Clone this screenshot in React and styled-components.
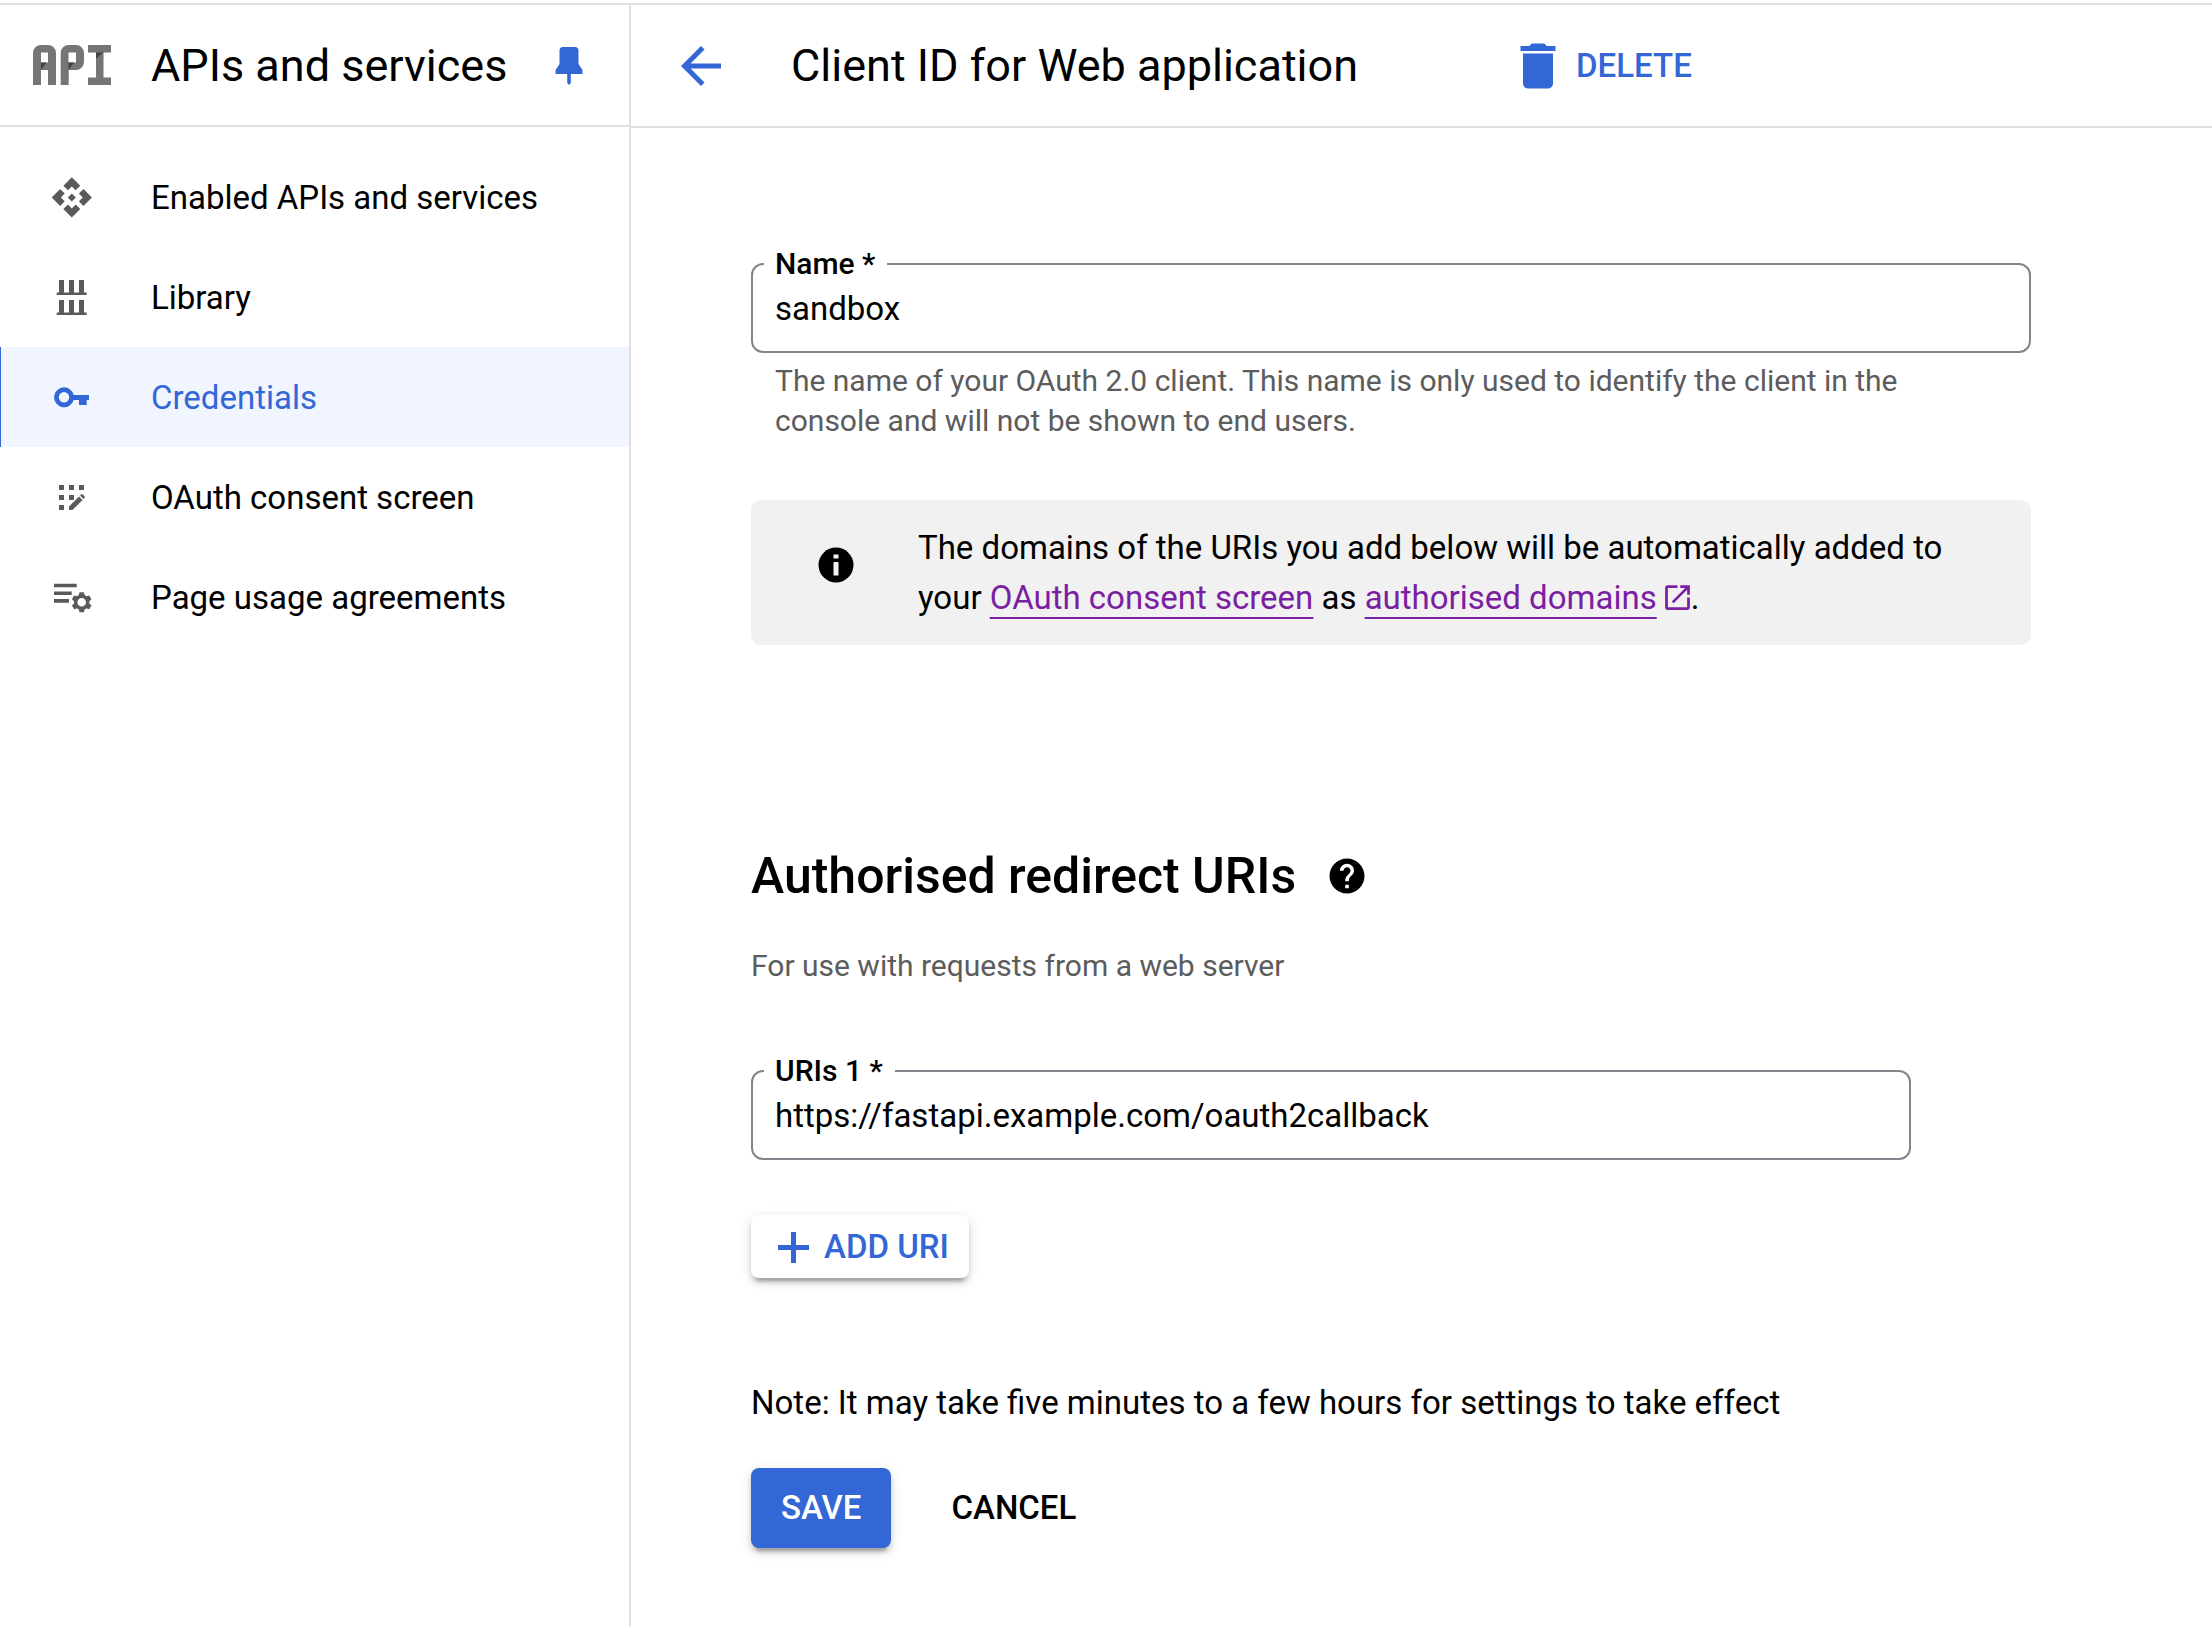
import React from "react";
import styled, { createGlobalStyle } from "styled-components";
import { MdOutlineOpenInNew, MdHelp, MdArrowBack, MdDelete } from "react-icons/md";

const blue = "#3367d6";
const line = "#e0e0e0";

const GlobalStyle = createGlobalStyle`
  *, *::before, *::after { box-sizing: border-box; }
  body { margin: 0; background: #fff; color: #000; font: 400 33px/50px Roboto, "Liberation Sans", sans-serif; }
  h1, h2, p, ul, fieldset { margin: 0; padding: 0; }
  button, input { font: inherit; color: inherit; }
  svg { display: block; flex: none; }
`;

const Page = styled.div`
  display: flex;
  min-height: 100vh;
  padding-top: 3px;
`;

const Sidebar = styled.aside`
  flex: none;
  width: 631px;
  border-top: 2px solid ${line};
  border-right: 2px solid ${line};
`;

const SidebarHeader = styled.header`
  display: flex;
  align-items: center;
  height: 122px;
  padding: 2px 46px 0 32px;
  border-bottom: 2px solid ${line};
`;

const ProductTitle = styled.h2`
  flex: 1;
  margin-left: 39px;
  font-size: 45px;
  font-weight: 400;
  line-height: 60px;
`;

const IconButton = styled.button`
  display: flex;
  padding: 0;
  border: 0;
  background: none;
  color: ${blue};
  cursor: pointer;
`;

const NavList = styled.ul`
  padding-top: 20px;
  list-style: none;
`;

const NavLink = styled.a`
  display: flex;
  align-items: center;
  height: 100px;
  padding: 2px 0 0 ${(p) => (p.$active ? 50 : 51)}px;
  border-left: ${(p) => (p.$active ? `1px solid ${blue}` : "0")};
  background: ${(p) => (p.$active ? "#f0f5ff" : "transparent")};
  color: ${(p) => (p.$active ? blue : "#000")};
  text-decoration: none;

  svg {
    margin-right: 58px;
    color: ${(p) => (p.$active ? blue : "#5a5a5a")};
  }
`;

const Main = styled.main`
  flex: 1;
  min-width: 0;
  border-top: 2px solid ${line};
`;

const Toolbar = styled.header`
  display: flex;
  align-items: center;
  height: 123px;
  padding-left: 40px;
  border-bottom: 2px solid ${line};
`;

const PageTitle = styled.h1`
  margin: 0 150px 0 60px;
  font-size: 45px;
  font-weight: 400;
  line-height: 60px;
`;

const DeleteButton = styled(IconButton)`
  align-items: center;
  gap: 8px;
  font-weight: 500;
`;

const Form = styled.form`
  max-width: 1400px;
  padding: 120px 0 77px 120px;
`;

const Outline = styled.fieldset`
  min-width: 0;
  max-width: ${(p) => p.$width};
  border: 2px solid #80868b;
  border-radius: 12px;
`;

const Legend = styled.legend`
  margin-left: 11px;
  padding: 0 12px 0 11px;
  font-size: 30px;
  font-weight: 500;
  line-height: 32px;
`;

const TextInput = styled.input`
  display: block;
  width: 100%;
  height: 71px;
  padding: 0 22px 14px;
  border: 0;
  outline: 0;
  background: none;
`;

const Hint = styled.p`
  padding: 8px 24px 0;
  color: #5c5c5c;
  font-size: 30px;
  line-height: 40px;
`;

const Banner = styled.section`
  display: flex;
  margin-top: 59px;
  padding: 23px 68px 22px 67px;
  border-radius: 10px;
  background: #f1f1f1;

  > svg {
    margin: 24px 64px 0 0;
  }
`;

const TextLink = styled.a`
  color: #7b1fa2;
  text-decoration: underline 2px;
  text-underline-offset: 8px;
  text-decoration-skip-ink: none;
`;

const ExternalLink = styled.a`
  display: inline-block;
  margin: 0 -3px 0 4px;
  color: #7b1fa2;
  vertical-align: -5px;
`;

const SectionHeading = styled.div`
  display: flex;
  align-items: center;
  gap: 30px;
  margin-top: 201px;

  h2 {
    font-size: 50px;
    font-weight: 500;
    line-height: 60px;
  }
`;

const SectionNote = styled.p`
  margin: 40px 0 69px;
  color: #5c5c5c;
  font-size: 30px;
  line-height: 40px;
`;

const Button = styled.button`
  display: inline-flex;
  align-items: center;
  justify-content: center;
  gap: 9px;
  height: ${(p) => (p.$compact ? 63 : 80)}px;
  padding: 0 ${(p) => (p.$compact ? 20 : 30)}px;
  border: 0;
  border-radius: 8px;
  background: ${(p) => (p.$primary ? blue : "#fff")};
  color: ${(p) => (p.$primary ? "#fff" : p.$compact ? blue : "#000")};
  box-shadow: ${(p) =>
    p.$flat ? "none" : "0 8px 3px -5px rgba(0,0,0,.2), 0 5px 5px rgba(0,0,0,.14), 0 3px 13px rgba(0,0,0,.12)"};
  font-weight: 500;
  cursor: pointer;
`;

const AddRow = styled.div`
  display: flex;
  margin-top: 55px;
`;

const Note = styled.p`
  margin-top: 100px;
`;

const Actions = styled.div`
  display: flex;
  gap: 30px;
  margin-top: 40px;
`;

const ApiLogo = () => (
  <svg width="80" height="44" viewBox="0 0 80 44" fill="#757575" aria-hidden="true">
    <path fillRule="evenodd" d="M1 41V9a8 8 0 0 1 8-8h7a8 8 0 0 1 8 8v32h-8V26H9v15zM9 18.500h7V8.500H9z" />
    <path fillRule="evenodd" d="M28.700 41V9a8 8 0 0 1 8-8h7.300a8 8 0 0 1 8 8v9a8 8 0 0 1-8 8h-7.300v15zM36.500 18.500h7.500V8.500h-7.500z" />
    <path d="M56 1h23v7.500h-7.500v25H79V41H56v-7.500h8v-25h-8z" />
    <path fill="#424242" d="M9 18.500h5.500L9 26zM36.500 18.500h5.500L36.500 26zM64 8.500h7.500L64 14.500z" />
  </svg>
);

const PinIcon = () => (
  <svg width="28" height="40" viewBox="0 0 28 40" fill="currentColor" aria-hidden="true">
    <path d="M8 1h12q3.500 0 3.500 3.500V18l4 6v4H.5v-4l4-6V4.500Q4.500 1 8 1zM12.200 27h3.600v10l-1.800 2-1.800-2z" />
  </svg>
);

const NavIcon = ({ viewBox = "0 0 42 42", children }) => (
  <svg width="42" height="42" viewBox={viewBox} fill="currentColor" aria-hidden="true">
    {children}
  </svg>
);

const ApiIcon = () => (
  <NavIcon viewBox="0.6 0.8 23 23">
    <path d="M14.200 12 12 14.200 9.800 12 12 9.800zM12 6l2.120 2.120 2.500-2.500L12 1 7.380 5.620l2.500 2.500zM6 12l2.120-2.120-2.500-2.500L1 12l4.620 4.620 2.500-2.500zM18 12l-2.120 2.120 2.500 2.500L23 12l-4.620-4.620-2.500 2.500zM12 18l-2.120-2.120-2.500 2.500L12 23l4.620-4.620-2.500-2.500z" />
  </NavIcon>
);

const LibraryIcon = () => (
  <NavIcon>
    <path d="M8 3h5v12.600h5V3h5v12.600h5V3h5v12.600h2.700V18H5.700v-2.400H8zM8 23h5v12.600h5V23h5v12.600h5V23h5v12.600h2.700V38H5.700v-2.400H8z" />
  </NavIcon>
);

const KeyIcon = () => (
  <NavIcon>
    <path
      fillRule="evenodd"
      d="M13 10.300a10 10 0 0 1 9.700 7.600H38V23h-2.300v5H28v-5h-5.300A10 10 0 1 1 13 10.300zM13 15.100a5.200 5.200 0 1 0 0 10.400 5.200 5.200 0 0 0 0-10.400z"
    />
  </NavIcon>
);

const ConsentIcon = () => (
  <NavIcon>
    <path d="M8 8h5v5H8zM18 8h5v5h-5zM28 8h5v5h-5zM8 18h5v5H8zM18 18h5v5h-5zM8 28h5v5H8z" />
    <path d="M18 29.500 28 19.500l3.500 3.500-10 10H18zM29 18.500l1-1q.9-.8 1.700 0l1.800 1.800q.8.900 0 1.700l-1 1z" />
  </NavIcon>
);

const AgreementsIcon = () => (
  <NavIcon>
    <path d="M3 6.700h22.700v3.600H3zM3 14.500h17.700V18H3zM3 22h15v3.700H3z" />
    <g transform="translate(30.700 25.300)">
      <circle r="6" fill="none" stroke="currentColor" strokeWidth="3.400" />
      {[0, 60, 120, 180, 240, 300].map((angle) => (
        <path key={angle} d="M-2.200-10h4.400l1 4.200h-6.400z" transform={`rotate(${angle})`} />
      ))}
    </g>
  </NavIcon>
);

const InfoIcon = () => (
  <svg width="36" height="36" viewBox="0 0 36 36" aria-hidden="true">
    <circle cx="18" cy="18" r="17.500" />
    <path fill="#f1f1f1" d="M15.500 7.500h5v4h-5zM15.500 15h5v13.500h-5z" />
  </svg>
);

const PlusIcon = () => (
  <svg width="44" height="44" viewBox="0 0 44 44" fill="currentColor" aria-hidden="true">
    <path d="M20 7h5v13h13v5H25v13h-5V25H7v-5h13z" />
  </svg>
);

const navItems = [
  { label: "Enabled APIs and services", icon: <ApiIcon /> },
  { label: "Library", icon: <LibraryIcon /> },
  { label: "Credentials", icon: <KeyIcon />, active: true },
  { label: "OAuth consent screen", icon: <ConsentIcon /> },
  { label: "Page usage agreements", icon: <AgreementsIcon /> },
];

function Field({ id, label, value, width }) {
  return (
    <Outline $width={width}>
      <Legend>
        <label htmlFor={id}>{label}</label>
      </Legend>
      <TextInput id={id} type="text" defaultValue={value} required />
    </Outline>
  );
}

export default function App() {
  return (
    <Page>
      <GlobalStyle />
      <Sidebar>
        <SidebarHeader>
          <ApiLogo />
          <ProductTitle>APIs and services</ProductTitle>
          <IconButton type="button" aria-label="Pin">
            <PinIcon />
          </IconButton>
        </SidebarHeader>
        <nav>
          <NavList>
            {navItems.map((item) => (
              <li key={item.label}>
                <NavLink href="#" $active={item.active}>
                  {item.icon}
                  {item.label}
                </NavLink>
              </li>
            ))}
          </NavList>
        </nav>
      </Sidebar>
      <Main>
        <Toolbar>
          <IconButton type="button" aria-label="Back">
            <MdArrowBack size={60} />
          </IconButton>
          <PageTitle>Client ID for Web application</PageTitle>
          <DeleteButton type="button">
            <MdDelete size={60} />
            DELETE
          </DeleteButton>
        </Toolbar>
        <Form onSubmit={(e) => e.preventDefault()}>
          <Field id="name" label="Name *" value="sandbox" width="100%" />
          <Hint>
            The name of your OAuth 2.0 client. This name is only used to identify the client in the console and will
            not be shown to end users.
          </Hint>
          <Banner>
            <InfoIcon />
            <p>
              The domains of the URIs you add below will be automatically added to your{" "}
              <TextLink href="#">OAuth consent screen</TextLink> as <TextLink href="#">authorised domains</TextLink>
              <ExternalLink href="#" aria-label="Open in new tab">
                <MdOutlineOpenInNew size={33} />
              </ExternalLink>
              .
            </p>
          </Banner>
          <SectionHeading>
            <h2>Authorised redirect URIs</h2>
            <MdHelp size={42} />
          </SectionHeading>
          <SectionNote>For use with requests from a web server</SectionNote>
          <Field id="uri-1" label="URIs 1 *" value="https://fastapi.example.com/oauth2callback" width="1160px" />
          <AddRow>
            <Button type="button" $compact>
              <PlusIcon />
              ADD URI
            </Button>
          </AddRow>
          <Note>Note: It may take five minutes to a few hours for settings to take effect</Note>
          <Actions>
            <Button type="submit" $primary>
              SAVE
            </Button>
            <Button type="button" $flat>
              CANCEL
            </Button>
          </Actions>
        </Form>
      </Main>
    </Page>
  );
}
